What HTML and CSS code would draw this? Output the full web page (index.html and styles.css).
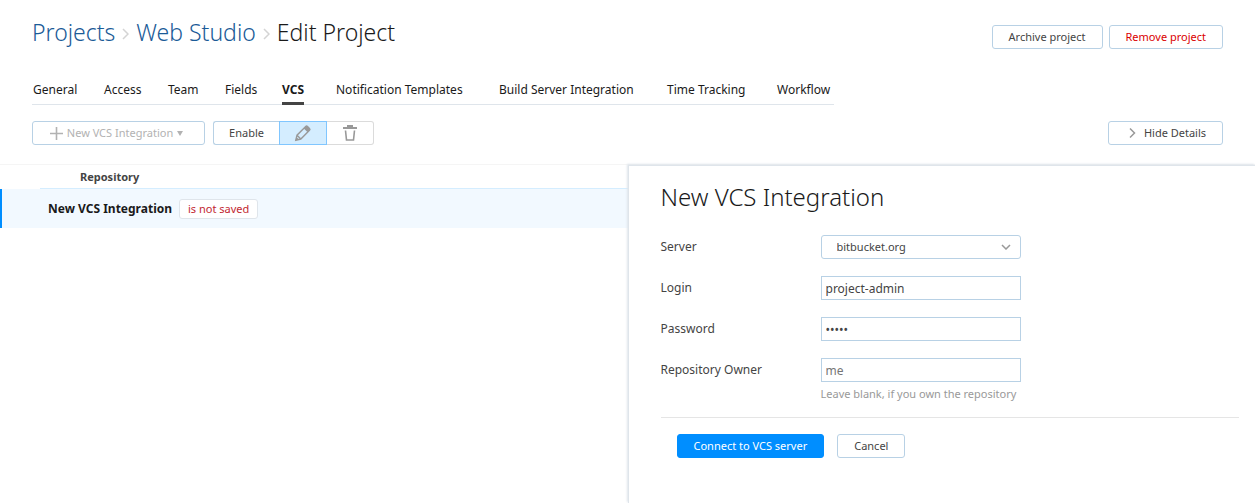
FILE: index.html
```html
<!DOCTYPE html>
<html lang="en">
<head>
<meta charset="utf-8">
<title>Edit Project</title>
<link rel="stylesheet" href="styles.css">
</head>
<body>
<header class="header">
  <h1 class="breadcrumbs">
    <a href="#">Projects</a>
    <svg class="crumb-sep" width="7" height="12" viewBox="0 0 7 12"><path d="M1 1l5 5-5 5"/></svg>
    <a href="#">Web Studio</a>
    <svg class="crumb-sep" width="7" height="12" viewBox="0 0 7 12"><path d="M1 1l5 5-5 5"/></svg>
    <span>Edit Project</span>
  </h1>
  <div class="header-actions">
    <button class="btn" type="button">Archive project</button>
    <button class="btn btn-danger" type="button">Remove project</button>
  </div>
</header>
<nav class="tabs">
  <a href="#">General</a>
  <a href="#">Access</a>
  <a href="#">Team</a>
  <a href="#">Fields</a>
  <a href="#" class="active" aria-current="page">VCS</a>
  <a href="#">Notification Templates</a>
  <a href="#">Build Server Integration</a>
  <a href="#">Time Tracking</a>
  <a href="#">Workflow</a>
</nav>
<div class="toolbar">
  <button class="btn btn-new" type="button" disabled>
    <svg width="13" height="13" viewBox="0 0 13 13"><path d="M6.500 0v13M0 6.500h13" stroke="#b2b2b2" stroke-width="1.600"/></svg>
    <span>New VCS Integration</span>
    <svg width="6" height="5" viewBox="0 0 6 5"><path d="M0 0h6L3 5z" fill="#b2b2b2"/></svg>
  </button>
  <div class="btn-group">
    <button class="btn btn-enable" type="button">Enable</button>
    <button class="btn btn-icon pressed" type="button" aria-label="Edit">
      <svg width="18" height="18" viewBox="0 0 18 18"><path d="M1.800 16.200l1.200-5L11.700 2.500q.9-.9 1.800 0l2 2q.9.900 0 1.800L6.800 15zM3 11.200l3.800 3.800" fill="none" stroke="#999" stroke-width="1.400"/><path d="M1.500 16.500l.9-3.500 2.600 2.600zM9.800 4.400l1.900-1.900q.9-.9 1.800 0l2 2q.9.900 0 1.800l-1.900 1.900z" fill="#999"/></svg>
    </button>
    <button class="btn btn-icon btn-delete" type="button" aria-label="Delete">
      <svg width="14" height="16" viewBox="0 0 14 16"><path d="M0 3h14M4 1h6" fill="none" stroke="#999" stroke-width="2"/><path d="M2.500 5.500l1 9.500h7l1-9.500" fill="none" stroke="#999" stroke-width="1.600"/></svg>
    </button>
  </div>
  <button class="btn btn-hide" type="button">
    <svg width="7" height="12" viewBox="0 0 7 12"><path d="M1 1.500L5.500 6 1 10.500" fill="none" stroke="#999" stroke-width="1.500"/></svg>
    <span>Hide Details</span>
  </button>
</div>
<main class="content">
  <section class="list">
    <table class="repos">
      <thead><tr><th class="gutter"></th><th class="name-head" scope="col">Repository</th></tr></thead>
      <tbody><tr><td class="gutter mark"></td><td class="name"><div class="name-line"><b>New VCS Integration</b><span class="tag">is not saved</span></div></td></tr></tbody>
    </table>
  </section>
  <section class="details">
    <h2>New VCS Integration</h2>
    <form>
      <div class="field">
        <label for="server">Server</label>
        <div class="select">
          <select id="server"><option>bitbucket.org</option></select>
          <svg width="10" height="6" viewBox="0 0 10 6"><path d="M1 1l4 4 4-4" fill="none" stroke="#999" stroke-width="1.500"/></svg>
        </div>
      </div>
      <div class="field">
        <label for="login">Login</label>
        <input id="login" type="text" value="project-admin">
      </div>
      <div class="field">
        <label for="password">Password</label>
        <input id="password" type="password" value="admin">
      </div>
      <div class="field">
        <label for="owner">Repository Owner</label>
        <input id="owner" type="text" placeholder="me" aria-describedby="owner-hint">
      </div>
      <p class="hint" id="owner-hint">Leave blank, if you own the repository</p>
      <div class="form-actions">
        <button class="btn btn-primary" type="button">Connect to VCS server</button>
        <button class="btn" type="button">Cancel</button>
      </div>
    </form>
  </section>
</main>
</body>
</html>
```
FILE: styles.css
```css
* { box-sizing: border-box; }

body {
  margin: 0;
  min-height: 100vh;
  display: flex;
  flex-direction: column;
  background: #fff;
  color: #444;
  font: 12px/16px "Noto Sans", "Open Sans", sans-serif;
}

a { text-decoration: none; }

button, input, select { font: inherit; color: inherit; margin: 0; }

.header {
  display: flex;
  justify-content: space-between;
  align-items: flex-start;
  padding: 16px 32px 0;
}

.breadcrumbs {
  display: flex;
  align-items: center;
  gap: 7px;
  margin: 0;
  font-size: 23px;
  line-height: 32px;
  font-weight: 350;
  color: #1a1a1a;
}

.breadcrumbs a { color: #1b5b97; }

.crumb-sep { margin-top: 3px; fill: none; stroke: #d4d4d4; stroke-width: 1.500; }

.header-actions { display: flex; gap: 6px; padding-top: 9px; }

.btn {
  display: inline-flex;
  align-items: center;
  justify-content: center;
  height: 24px;
  padding: 0 16px;
  border: 1px solid #b8d1e5;
  border-radius: 3px;
  background: #fff;
  color: #444;
  white-space: nowrap;
  font-size: 11px;
}

.btn-danger { color: #db0000; }

.tabs {
  display: grid;
  grid-template-columns: 71px 64px 57px 57px 54px 163px 168px 110px 57px;
  align-self: flex-start;
  margin: 31px 32px 0;
  padding-left: 1px;
  border-bottom: 1px solid #dfe5eb;
}

.tabs a {
  justify-self: start;
  padding: 2px 0 6px;
  color: #1a1a1a;
  white-space: nowrap;
}

.tabs .active {
  margin-bottom: -1px;
  border-bottom: 3px solid #444;
  padding-bottom: 4px;
  font-weight: 700;
}

.toolbar { display: flex; gap: 8px; padding: 16px 32px 19px; }

.btn-new { width: 173px; gap: 4px; padding: 0 4px 0 0; color: #b2b2b2; }

.btn-group { display: flex; }

.btn-enable { width: 66px; padding: 0; border-right: 0; border-radius: 3px 0 0 3px; }

.btn-icon { width: 48px; padding: 0; border-radius: 0; }

.pressed { border-color: #80c6ff; background: #d4edff; }

.btn-delete { width: 47px; border-color: #dbdbdb; border-left: 0; border-radius: 0 3px 3px 0; }

.btn-hide { width: 115px; padding: 0 0 0 4px; gap: 8px; margin-left: auto; }

.content { display: flex; flex: 1; border-top: 1px solid #f5f5f5; }

.list { flex: 1 1 50%; }

.repos { width: 100%; border-collapse: separate; border-spacing: 0; text-align: left; }

.repos th, .repos td { padding: 0; }

.gutter { width: 40px; }

.repos .name-head { height: 24px; padding-left: 40px; border-bottom: 1px solid #d4edff; font-size: 11px; }

.repos tbody { background: #f2f9ff; }

.repos td { height: 39px; }

.repos .mark { box-shadow: inset 2px 0 #008eff; }

.repos .name { padding-left: 8px; }

.name-line { display: flex; align-items: center; gap: 7px; color: #1a1a1a; }

.tag {
  padding: 1px 8px;
  border: 1px solid #dfe5eb;
  border-radius: 3px;
  background: #fff;
  color: #c22731;
  font-size: 11px;
}

.details {
  flex: 1 1 50%;
  padding: 15px 16px 16px 32px;
  border-top: 1px solid #dfe5eb;
  border-left: 1px solid #dfe5eb;
  box-shadow: -1px -1px 2px #dfe5eb;
}

.details h2 {
  margin: 0 0 22px;
  font-size: 24px;
  line-height: 32px;
  font-weight: 350;
  color: #1a1a1a;
}

.field { display: grid; grid-template-columns: 160px 200px; margin-bottom: 17px; }

.field label { padding-top: 4px; }

.field input, .select select {
  width: 100%;
  height: 24px;
  padding: 0 4px;
  border: 1px solid #b8d1e5;
  border-radius: 0;
  background: #fff;
}

.field input::placeholder { color: #757575; opacity: 1; }

.select { display: grid; align-items: center; }

.select > * { grid-area: 1 / 1; }

.select select { appearance: none; padding: 0 15px; border-radius: 3px; font-size: 11px; }

.select svg { justify-self: end; margin-right: 10px; pointer-events: none; }

.hint { margin: -13px 0 0 160px; color: #999; font-size: 11px; }

.form-actions {
  display: flex;
  gap: 13px;
  margin-top: 15px;
  padding: 16px;
  border-top: 1px solid #e5e5e5;
}

.btn-primary { border-color: #008eff; background: #008eff; color: #fff; }
```
